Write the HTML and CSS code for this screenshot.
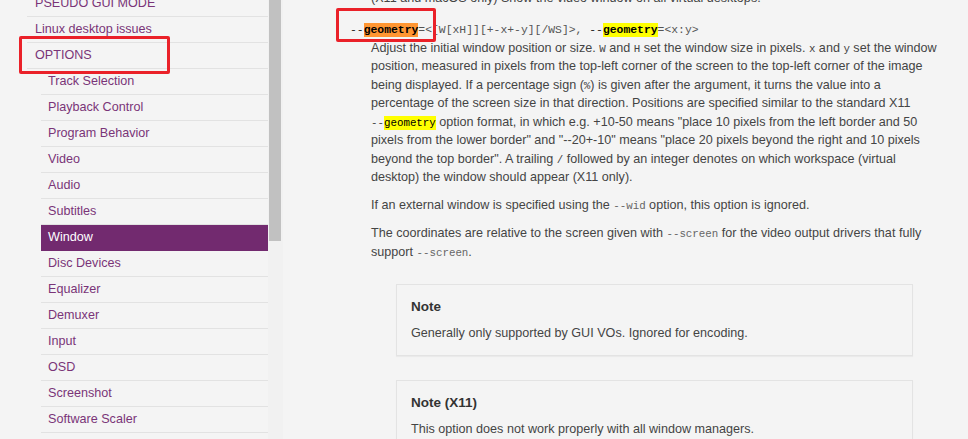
FILE: index.html
```html
<!DOCTYPE html>
<html>
<head>
<meta charset="utf-8">
<title>mpv manual - Window</title>
<link rel="stylesheet" href="styles.css">
</head>
<body>
<div class="page">
  <aside class="sidebar">
    <nav class="toc">
      <ul class="toc-list">
        <li><a>PSEUDO GUI MODE</a></li>
        <li><a>Linux desktop issues</a></li>
        <li><a>OPTIONS</a>
          <ul class="toc-sub">
            <li><a>Track Selection</a></li>
            <li><a>Playback Control</a></li>
            <li><a>Program Behavior</a></li>
            <li><a>Video</a></li>
            <li><a>Audio</a></li>
            <li><a>Subtitles</a></li>
            <li><a class="active">Window</a></li>
            <li><a>Disc Devices</a></li>
            <li><a>Equalizer</a></li>
            <li><a>Demuxer</a></li>
            <li><a>Input</a></li>
            <li><a>OSD</a></li>
            <li><a>Screenshot</a></li>
            <li><a>Software Scaler</a></li>
            <li><a>Audio Resampler</a></li>
          </ul>
        </li>
      </ul>
    </nav>
    <div class="scrollbar"><div class="thumb"></div></div>
  </aside>
  <main class="content">
    <dl class="opts">
      <dd class="opt-desc opt-prev"><p>(X11 and macOS only) Show the video window on all virtual desktops.</p></dd>
      <dt class="opt-name"><span class="dash">--</span><mark class="hl-current">geometry</mark>=&lt;[W[xH]][+-x+-y][/WS]&gt;, <span class="dash">--</span><mark class="hl-bold">geometry</mark>=&lt;x:y&gt;</dt>
      <dd class="opt-desc">
        <p>Adjust the initial window position or size. <code>W</code> and <code>H</code> set the window size in pixels. <code>x</code> and <code>y</code> set the window<br>position, measured in pixels from the top-left corner of the screen to the top-left corner of the image<br>being displayed. If a percentage sign (<code>%</code>) is given after the argument, it turns the value into a<br>percentage of the screen size in that direction. Positions are specified similar to the standard X11<br><code>--<mark class="hl">geometry</mark></code> option format, in which e.g. +10-50 means "place 10 pixels from the left border and 50<br>pixels from the lower border" and "--20+-10" means "place 20 pixels beyond the right and 10 pixels<br>beyond the top border". A trailing <code>/</code> followed by an integer denotes on which workspace (virtual<br>desktop) the window should appear (X11 only).</p>
        <p>If an external window is specified using the <code class="light">--wid</code> option, this option is ignored.</p>
        <p>The coordinates are relative to the screen given with <code class="light">--screen</code> for the video output drivers that fully<br>support <code class="light">--screen</code>.</p>
        <div class="note">
          <p class="note-title">Note</p>
          <p>Generally only supported by GUI VOs. Ignored for encoding.</p>
        </div>
        <div class="note">
          <p class="note-title">Note (X11)</p>
          <p>This option does not work properly with all window managers.</p>
        </div>
      </dd>
    </dl>
  </main>
</div>
<div class="mark mark-options"></div>
<div class="mark mark-geometry"></div>
</body>
</html>
```
FILE: styles.css
```css
* { box-sizing: border-box; }
html, body { margin: 0; padding: 0; }
body {
  background: #f4f4f4;
  font-family: "Liberation Sans", Arial, sans-serif;
  font-size: 12.6px;
  color: #444;
  height: 439px;
  overflow: hidden;
  position: relative;
}
.page { display: flex; height: 439px; overflow: hidden; }

/* sidebar */
.sidebar { display: flex; flex: none; width: 283px; padding-left: 27px; }
.toc { width: 241px; margin-top: -9px; }
.toc ul { list-style: none; margin: 0; padding: 0; }
.toc a {
  display: block;
  height: 26px;
  line-height: 24px;
  padding-left: 8px;
  border-bottom: 1px solid #e2e2e2;
  color: #7a3478;
  text-decoration: none;
  white-space: nowrap;
}
.toc ul.toc-sub { margin-left: 14px; }
.toc-sub a { padding-left: 7px; }
.toc-sub a.active { background: #722a6f; border-bottom-color: #722a6f; color: #fff; }
.scrollbar { flex: none; width: 15px; background: #f1f1f1; padding-left: 1px; }
.thumb { width: 12px; height: 241px; background: #c1c1c1; }

/* content */
.content { flex: 1; padding-left: 67px; }
.opts { margin: 0; }
.opt-desc { margin: 0 0 0 21px; width: 570px; line-height: 18.5px; }
.opt-desc p { margin: 9.5px 0 0; white-space: nowrap; }
.opt-desc p:first-child { margin-top: 0; }
.opt-prev { margin-top: -11px; }
.opt-name {
  margin-top: 13px;
  font-family: "Liberation Mono", "Courier New", monospace;
  font-size: 11.4px;
  line-height: 18px;
  color: #555;
  white-space: nowrap;
}
.opt-name .dash { color: #222; }
mark { color: #000; padding: 1px 0; line-height: 1; }
.hl-current { background: #ff9632; font-weight: bold; }
.hl-bold { background: #ffff00; font-weight: bold; }
.hl { background: #ffff00; }
code {
  font-family: "Liberation Mono", "Courier New", monospace;
  font-size: 10.8px;
  line-height: 1;
  color: #444;
}
code.light { color: #666; }

.note {
  margin: 24px 28px 0 25px;
  border: 1px solid #e3e3e3;
  box-shadow: 0 1px 1px rgba(0, 0, 0, 0.04);
  padding: 13px 14px 12px;
}
.note:first-of-type { margin-top: 23px; }
.opt-desc .note p { margin: 8px 0 0; }
.opt-desc .note p.note-title {
  margin: 0;
  font-weight: bold;
  font-size: 13.5px;
  line-height: 18px;
  color: #333;
}

/* red annotation boxes drawn over the screenshot */
.mark {
  position: absolute;
  border: 3px solid #ea2129;
  border-radius: 2px;
}
.mark-options { left: 19px; top: 36px; width: 151px; height: 38px; }
.mark-geometry { left: 336px; top: 8px; width: 100px; height: 34px; }
```
